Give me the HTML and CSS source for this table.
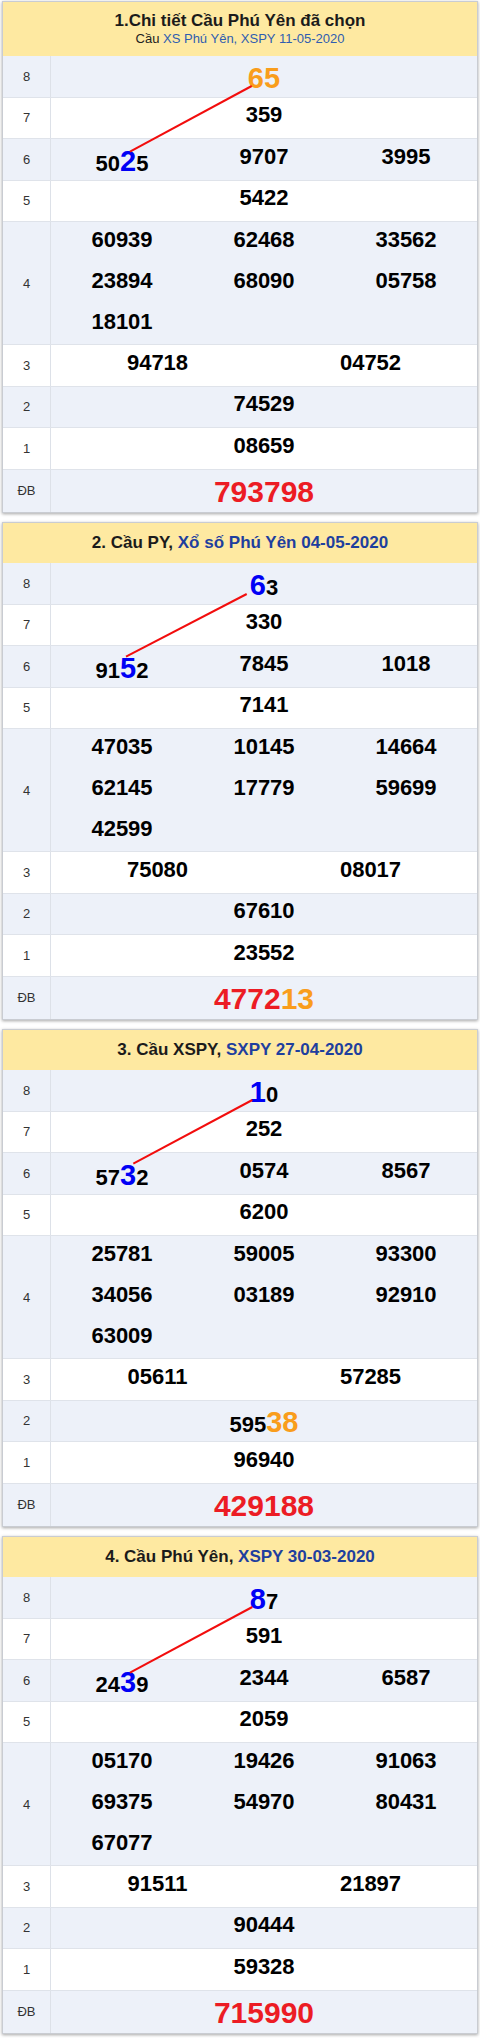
FILE: index.html
```html
<!DOCTYPE html>
<html lang="vi">
<head>
<meta charset="utf-8">
<title>Cầu Phú Yên</title>
<link rel="stylesheet" href="styles.css">
</head>
<body>
<main class="page">

<section class="cau">
  <header class="cau__head cau__head--sub">
    <h2 class="cau__title">1.Chi tiết Cầu Phú Yên đã chọn</h2>
    <p class="cau__sub">Cầu <span class="blue-lt">XS Phú Yên, XSPY 11-05-2020</span></p>
  </header>
  <div class="cau__body">
    <div class="row row--alt"><div class="row__label">8</div><div class="row__vals cols-1"><div class="v"><span class="hl orange">65</span></div></div></div>
    <div class="row"><div class="row__label">7</div><div class="row__vals cols-1"><div class="v">359</div></div></div>
    <div class="row row--alt"><div class="row__label">6</div><div class="row__vals cols-3"><div class="v">50<span class="hl blue">2</span>5</div><div class="v">9707</div><div class="v">3995</div></div></div>
    <div class="row"><div class="row__label">5</div><div class="row__vals cols-1"><div class="v">5422</div></div></div>
    <div class="row row--alt row--tall"><div class="row__label">4</div><div class="row__vals cols-3"><div class="v">60939</div><div class="v">62468</div><div class="v">33562</div><div class="v">23894</div><div class="v">68090</div><div class="v">05758</div><div class="v">18101</div></div></div>
    <div class="row"><div class="row__label">3</div><div class="row__vals cols-2"><div class="v">94718</div><div class="v">04752</div></div></div>
    <div class="row row--alt"><div class="row__label">2</div><div class="row__vals cols-1"><div class="v">74529</div></div></div>
    <div class="row"><div class="row__label">1</div><div class="row__vals cols-1"><div class="v">08659</div></div></div>
    <div class="row row--alt row--db"><div class="row__label">ĐB</div><div class="row__vals cols-1"><div class="v db">793798</div></div></div>
    <svg class="cau__line" aria-hidden="true"><line x1="127" y1="95.7" x2="248.7" y2="30"/></svg>
  </div>
</section>

<section class="cau">
  <header class="cau__head">
    <h2 class="cau__title">2. Cầu PY, <span class="blue">Xổ số Phú Yên 04-05-2020</span></h2>
  </header>
  <div class="cau__body">
    <div class="row row--alt"><div class="row__label">8</div><div class="row__vals cols-1"><div class="v"><span class="hl blue">6</span>3</div></div></div>
    <div class="row"><div class="row__label">7</div><div class="row__vals cols-1"><div class="v">330</div></div></div>
    <div class="row row--alt"><div class="row__label">6</div><div class="row__vals cols-3"><div class="v">91<span class="hl blue">5</span>2</div><div class="v">7845</div><div class="v">1018</div></div></div>
    <div class="row"><div class="row__label">5</div><div class="row__vals cols-1"><div class="v">7141</div></div></div>
    <div class="row row--alt row--tall"><div class="row__label">4</div><div class="row__vals cols-3"><div class="v">47035</div><div class="v">10145</div><div class="v">14664</div><div class="v">62145</div><div class="v">17779</div><div class="v">59699</div><div class="v">42599</div></div></div>
    <div class="row"><div class="row__label">3</div><div class="row__vals cols-2"><div class="v">75080</div><div class="v">08017</div></div></div>
    <div class="row row--alt"><div class="row__label">2</div><div class="row__vals cols-1"><div class="v">67610</div></div></div>
    <div class="row"><div class="row__label">1</div><div class="row__vals cols-1"><div class="v">23552</div></div></div>
    <div class="row row--alt row--db"><div class="row__label">ĐB</div><div class="row__vals cols-1"><div class="v db">4772<span class="orange">13</span></div></div></div>
    <svg class="cau__line" aria-hidden="true"><line x1="123" y1="93.7" x2="243.7" y2="31"/></svg>
  </div>
</section>

<section class="cau">
  <header class="cau__head">
    <h2 class="cau__title">3. Cầu XSPY, <span class="blue">SXPY 27-04-2020</span></h2>
  </header>
  <div class="cau__body">
    <div class="row row--alt"><div class="row__label">8</div><div class="row__vals cols-1"><div class="v"><span class="hl blue">1</span>0</div></div></div>
    <div class="row"><div class="row__label">7</div><div class="row__vals cols-1"><div class="v">252</div></div></div>
    <div class="row row--alt"><div class="row__label">6</div><div class="row__vals cols-3"><div class="v">57<span class="hl blue">3</span>2</div><div class="v">0574</div><div class="v">8567</div></div></div>
    <div class="row"><div class="row__label">5</div><div class="row__vals cols-1"><div class="v">6200</div></div></div>
    <div class="row row--alt row--tall"><div class="row__label">4</div><div class="row__vals cols-3"><div class="v">25781</div><div class="v">59005</div><div class="v">93300</div><div class="v">34056</div><div class="v">03189</div><div class="v">92910</div><div class="v">63009</div></div></div>
    <div class="row"><div class="row__label">3</div><div class="row__vals cols-2"><div class="v">05611</div><div class="v">57285</div></div></div>
    <div class="row row--alt"><div class="row__label">2</div><div class="row__vals cols-1"><div class="v">595<span class="hl orange">38</span></div></div></div>
    <div class="row"><div class="row__label">1</div><div class="row__vals cols-1"><div class="v">96940</div></div></div>
    <div class="row row--alt row--db"><div class="row__label">ĐB</div><div class="row__vals cols-1"><div class="v db">429188</div></div></div>
    <svg class="cau__line" aria-hidden="true"><line x1="130.3" y1="93.7" x2="249.3" y2="30"/></svg>
  </div>
</section>

<section class="cau">
  <header class="cau__head">
    <h2 class="cau__title">4. Cầu Phú Yên, <span class="blue">XSPY 30-03-2020</span></h2>
  </header>
  <div class="cau__body">
    <div class="row row--alt"><div class="row__label">8</div><div class="row__vals cols-1"><div class="v"><span class="hl blue">8</span>7</div></div></div>
    <div class="row"><div class="row__label">7</div><div class="row__vals cols-1"><div class="v">591</div></div></div>
    <div class="row row--alt"><div class="row__label">6</div><div class="row__vals cols-3"><div class="v">24<span class="hl blue">3</span>9</div><div class="v">2344</div><div class="v">6587</div></div></div>
    <div class="row"><div class="row__label">5</div><div class="row__vals cols-1"><div class="v">2059</div></div></div>
    <div class="row row--alt row--tall"><div class="row__label">4</div><div class="row__vals cols-3"><div class="v">05170</div><div class="v">19426</div><div class="v">91063</div><div class="v">69375</div><div class="v">54970</div><div class="v">80431</div><div class="v">67077</div></div></div>
    <div class="row"><div class="row__label">3</div><div class="row__vals cols-2"><div class="v">91511</div><div class="v">21897</div></div></div>
    <div class="row row--alt"><div class="row__label">2</div><div class="row__vals cols-1"><div class="v">90444</div></div></div>
    <div class="row"><div class="row__label">1</div><div class="row__vals cols-1"><div class="v">59328</div></div></div>
    <div class="row row--alt row--db"><div class="row__label">ĐB</div><div class="row__vals cols-1"><div class="v db">715990</div></div></div>
    <svg class="cau__line" aria-hidden="true"><line x1="127" y1="95.7" x2="249.3" y2="30"/></svg>
  </div>
</section>

</main>
</body>
</html>
```

FILE: styles.css
```css
html, body {
  margin: 0;
  padding: 0;
  background: #ffffff;
}

body {
  font-family: "Liberation Sans", Arial, sans-serif;
  color: #000;
}

.page {
  padding: 1px 2px 0 2px;
  width: 476px;
}

.cau {
  border: 1px solid #c9ccd2;
  box-shadow: 0 1px 3px rgba(0, 0, 0, 0.35);
  margin-bottom: 9.5px;
  background: #fff;
}

.cau__head {
  background: #fee9a1;
  text-align: center;
  padding: 10px 0;
}

.cau__head--sub {
  padding: 9px 0;
}

.cau__title {
  margin: 0;
  font-size: 17px;
  line-height: 20px;
  font-weight: bold;
  color: #1b1b1b;
}

.cau__sub {
  margin: 0;
  font-size: 13px;
  line-height: 16px;
  color: #222;
}

.blue {
  color: #1e3f9e;
}

.blue-lt {
  color: #2f5db0;
}

.cau__body {
  position: relative;
}

.cau__line {
  position: absolute;
  left: 0;
  top: 0;
  width: 100%;
  height: 100%;
  overflow: visible;
  pointer-events: none;
}

.cau__line line {
  stroke: #f20d0d;
  stroke-width: 2;
}

.row {
  display: flex;
  height: 41.5px;
  box-sizing: border-box;
  border-bottom: 1px solid #dfe3ea;
  background: #ffffff;
}

.row:last-of-type {
  border-bottom: 0;
}

.row--alt {
  background: #edf1f9;
}

.row--tall {
  height: 123px;
}

.row--db {
  height: 42px;
}

.row__label {
  width: 48px;
  flex: none;
  box-sizing: border-box;
  border-right: 1px solid #dde1e8;
  display: flex;
  align-items: center;
  justify-content: center;
  font-size: 13px;
  color: #333;
}

.row__vals {
  flex: 1;
  display: grid;
  grid-auto-rows: 41px;
}

.cols-1 { grid-template-columns: 1fr; }
.cols-2 { grid-template-columns: 1fr 1fr; }
.cols-3 { grid-template-columns: 1fr 1fr 1fr; }

.v {
  padding-top: 4.5px;
  text-align: center;
  font-size: 22px;
  line-height: 1.2;
  font-weight: bold;
  color: #000;
  white-space: nowrap;
}

.hl {
  font-size: 29px;
}

.hl.blue,
.v .blue {
  color: #0000f5;
}

.orange {
  color: #f99d1c;
}

.db {
  font-size: 30px;
  color: #ec1c24;
}
```
